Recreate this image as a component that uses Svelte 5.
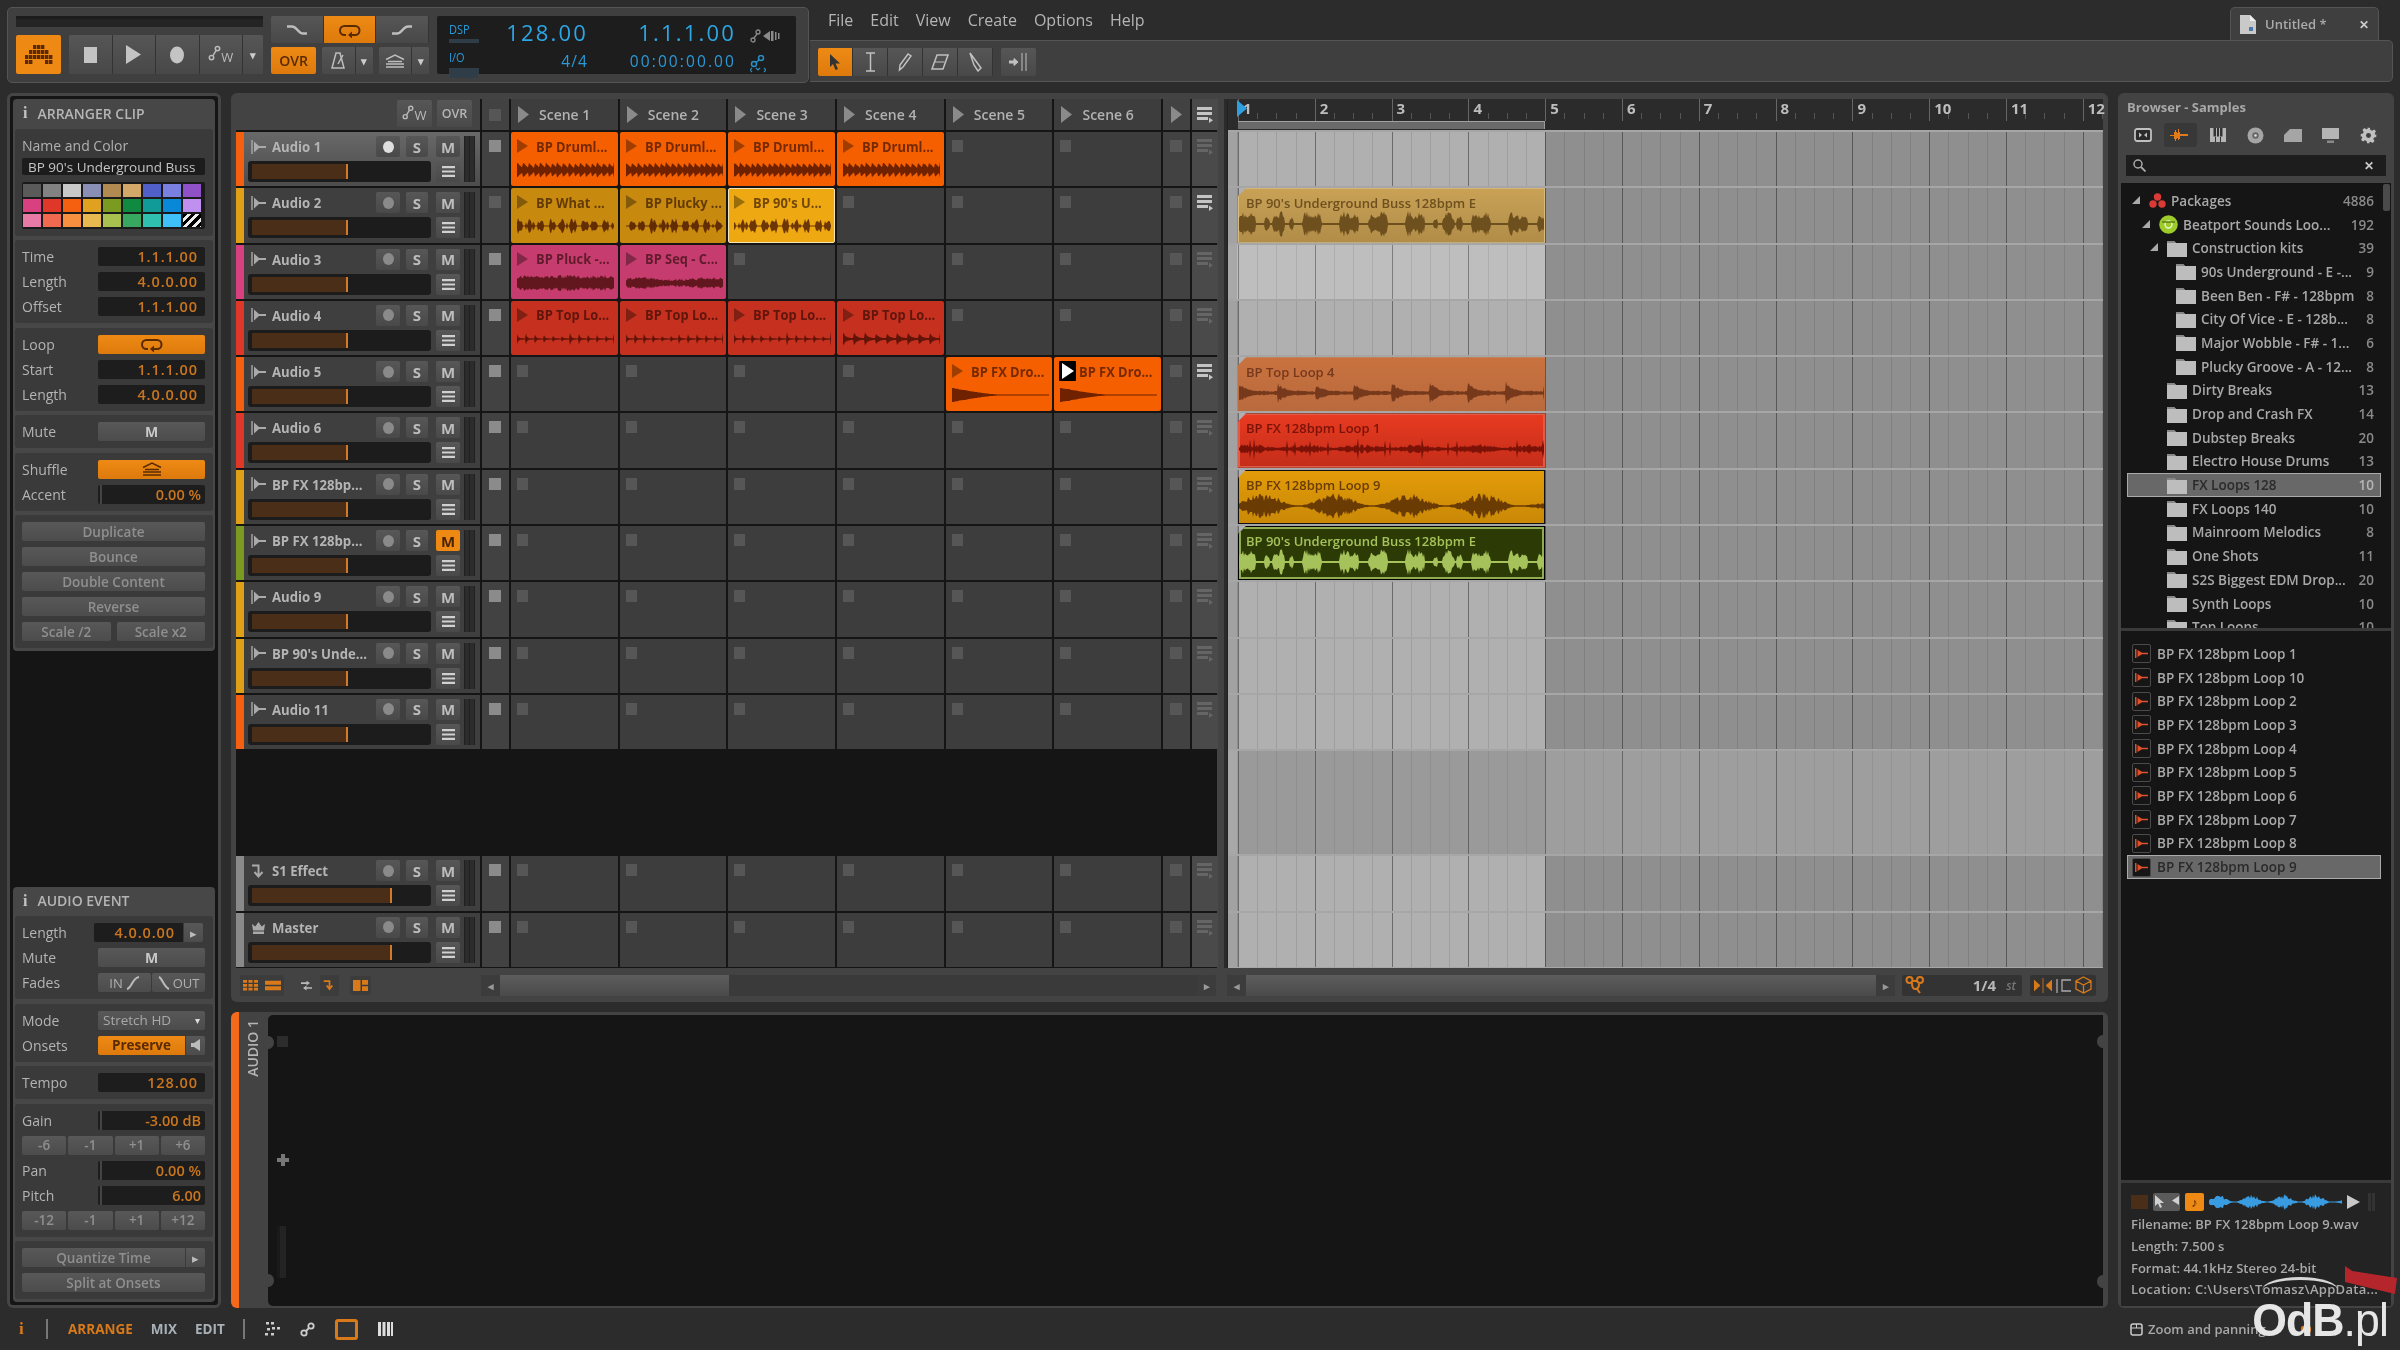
<script>
  const palette = [
    '#5a5a5a', '#828282', '#c8c8c8', '#8a8fb5', '#b08a50', '#d4a868', '#5060c8', '#7a80e0', '#9050c8',
    '#d84080', '#e03828', '#f56010', '#e0a020', '#7a9a20', '#108a40', '#109a98', '#0a88d8', '#c090f0',
    '#e87aa8', '#f06a50', '#f89040', '#e8b850', '#a8c050', '#38a860', '#30c0b0', '#40c0f8', '#000'
  ];

  const orange = '#f56010', gold = '#dfa018', pink = '#d84080', red = '#e03828', green = '#7a9a20';

  const tracks = [
    { name: 'Audio 1', color: orange, sel: true, bright: false },
    { name: 'Audio 2', color: gold, bright: true },
    { name: 'Audio 3', color: pink },
    { name: 'Audio 4', color: red },
    { name: 'Audio 5', color: orange, bright: true },
    { name: 'Audio 6', color: red },
    { name: 'BP FX 128bp...', color: gold },
    { name: 'BP FX 128bp...', color: green, muted: true },
    { name: 'Audio 9', color: gold },
    { name: "BP 90's Unde...", color: gold },
    { name: 'Audio 11', color: orange }
  ];

  const bottomTracks = [
    { name: 'S1 Effect', color: '#8a8a8a', icon: 'fx', wide: true },
    { name: 'Master', color: '#8a8a8a', icon: 'crown', wide: true }
  ];

  const rng = (seed) => () => (seed = (seed * 16807) % 2147483647) / 2147483647;

  // fake waveform, mirrored around the middle
  function wave(kind, seed, w, h) {
    const r = rng(seed);
    const top = [];
    const bot = [];
    for (let x = 0; x <= w; x += 1) {
      const t = x / w;
      let a = 0.1;
      if (kind === 'drum') {
        const ph = (t * 17) % 1;
        a = 0.25 + 0.75 * (1 - ph) * (0.8 + 0.2 * r());
      } else if (kind === 'bass') {
        const s = Math.sin(t * Math.PI * 18 + seed) + 0.7 * Math.sin(t * Math.PI * 47 + 1);
        a = s > -0.25 ? 0.3 + 0.55 * r() * (0.5 + 0.5 * Math.min(s, 1)) + 0.15 * Math.min(s, 1) : 0.07;
      } else if (kind === 'pluck') {
        a = 0.55 + 0.45 * r();
      } else if (kind === 'pluck2') {
        a = 0.3 + 0.35 * r() + 0.1 * Math.sin(t * 9);
      } else if (kind === 'top') {
        const ph = (t * 11) % 1;
        a = 0.08 + 0.9 * Math.exp(-ph * 9) * (0.6 + 0.4 * r());
      } else if (kind === 'top2') {
        const ph = (t * 9) % 1;
        a = 0.1 + 0.9 * Math.exp(-ph * 4) * (0.7 + 0.3 * r());
      } else if (kind === 'drop') {
        a = t < 0.5 ? 0.06 + 0.94 * Math.pow(1 - t * 2, 1.5) * (0.85 + 0.15 * r()) : 0.06;
      } else if (kind === 'loop') {
        const ph = (t * 8) % 1;
        a = 0.08 + 0.85 * Math.exp(-ph * 5) * (0.5 + 0.5 * r()) + (ph > 0.5 ? 0.08 * r() : 0);
      } else if (kind === 'fx1') {
        a = 0.08 + 0.3 * Math.abs(Math.sin(t * 17 + 1)) * r() + (r() > 0.96 ? 0.5 : 0);
      } else if (kind === 'fx9') {
        const s = Math.abs(Math.sin(t * 13 + 0.6));
        a = 0.05 + 0.95 * s * s * (0.35 + 0.65 * r()) * (t > 0.9 ? 0.3 : 1);
      }
      const amp = Math.min(a, 1) * (h / 2);
      top.push(`${x} ${(h / 2 - amp).toFixed(1)}`);
      bot.unshift(`${x} ${(h / 2 + amp).toFixed(1)}`);
    }
    return 'M' + top.join('L') + 'L' + bot.join('L') + 'Z';
  }

  const clipColors = { orange: '#f55f00', gold: '#c88a0e', pink: '#c73c6e', red: '#c5301f', sel: '#eda812' };

  // session clips by row, by scene
  const clips = {
    0: [['BP Druml...', 'orange', 'drum'], ['BP Druml...', 'orange', 'drum'], ['BP Druml...', 'orange', 'drum'], ['BP Druml...', 'orange', 'drum']],
    1: [['BP What ...', 'gold', 'bass'], ['BP Plucky ...', 'gold', 'bass'], ["BP 90's U...", 'sel', 'bass']],
    2: [['BP Pluck -...', 'pink', 'pluck'], ['BP Seq - C...', 'pink', 'pluck2']],
    3: [['BP Top Lo...', 'red', 'top'], ['BP Top Lo...', 'red', 'top'], ['BP Top Lo...', 'red', 'top'], ['BP Top Lo...', 'red', 'top2']],
    4: [null, null, null, null, ['BP FX Dro...', 'orange', 'drop'], ['BP FX Dro...', 'orange', 'drop', true]]
  };
  const scenes = [0, 1, 2, 3, 4, 5];

  const laneClips = {
    1: { name: "BP 90's Underground Buss 128bpm E", kind: 'bass', cls: 'tan' },
    4: { name: 'BP Top Loop 4', kind: 'loop', cls: 'rust' },
    5: { name: 'BP FX 128bpm Loop 1', kind: 'fx1', cls: 'fire' },
    6: { name: 'BP FX 128bpm Loop 9', kind: 'fx9', cls: 'amber' },
    7: { name: "BP 90's Underground Buss 128bpm E", kind: 'bass', cls: 'moss' }
  };

  const bars = [1, 2, 3, 4, 5, 6, 7, 8, 9, 10, 11, 12];

  const tree = [
    { t: 'Packages', n: 4886, lvl: 0, open: true, ic: 'pkg' },
    { t: 'Beatport Sounds Loo...', n: 192, lvl: 1, open: true, ic: 'bp' },
    { t: 'Construction kits', n: 39, lvl: 2, open: true },
    { t: '90s Underground - E -...', n: 9, lvl: 3 },
    { t: 'Been Ben - F# - 128bpm', n: 8, lvl: 3 },
    { t: 'City Of Vice - E - 128b...', n: 8, lvl: 3 },
    { t: 'Major Wobble - F# - 1...', n: 6, lvl: 3 },
    { t: 'Plucky Groove - A - 12...', n: 8, lvl: 3 },
    { t: 'Dirty Breaks', n: 13, lvl: 2 },
    { t: 'Drop and Crash FX', n: 14, lvl: 2 },
    { t: 'Dubstep Breaks', n: 20, lvl: 2 },
    { t: 'Electro House Drums', n: 13, lvl: 2 },
    { t: 'FX Loops 128', n: 10, lvl: 2, sel: true },
    { t: 'FX Loops 140', n: 10, lvl: 2 },
    { t: 'Mainroom Melodics', n: 8, lvl: 2 },
    { t: 'One Shots', n: 11, lvl: 2 },
    { t: 'S2S Biggest EDM Drop...', n: 20, lvl: 2 },
    { t: 'Synth Loops', n: 10, lvl: 2 },
    { t: 'Top Loops', n: 10, lvl: 2 }
  ];

  const files = ['1', '10', '2', '3', '4', '5', '6', '7', '8', '9'];
</script>

{#snippet auto(size = 26)}
  <span class="auto">
    <svg width={size * 0.5} height={size * 0.7} viewBox="0 0 13 18"><circle cx="9.5" cy="3.5" r="2.2" fill="none" stroke="#bbb" stroke-width="1.5" /><circle cx="3.5" cy="12.5" r="2.2" fill="none" stroke="#bbb" stroke-width="1.5" /><path d="M8 5.5 5 10.5" stroke="#bbb" stroke-width="1.5" /></svg><i>W</i>
  </span>
{/snippet}

{#snippet audioIcon()}
  <svg class="tk-ic" width="15" height="16" viewBox="0 0 15 16"><path d="M1 1v14" stroke="#aaa" stroke-width="1.4" /><path d="M3 2.5 8 7h7v2H8l-5 4.5z" fill="#aaa" /></svg>
{/snippet}

{#snippet loopIcon(c = '#5a2a00')}
  <svg width="22" height="16" viewBox="0 0 22 16"><path d="M7 13H5.5a4.5 4.5 0 0 1 0-9H16a4.5 4.5 0 0 1 0 9h-3" fill="none" stroke={c} stroke-width="2" /><path d="M13 9.5v7l-4-3.5z" fill={c} /></svg>
{/snippet}

{#snippet grooveIcon(c = '#5a2a00')}
  <svg width="20" height="14" viewBox="0 0 20 14"><path d="M1 5.5 10 1l9 4.5M3 7.5h14M1 10h18M1 13h18" fill="none" stroke={c} stroke-width="1.4" /></svg>
{/snippet}

{#snippet menuIcon()}
  <svg width="13" height="11" viewBox="0 0 13 11"><path d="M0 0h13v2.2H0zM0 4.4h13v2.2H0zM0 8.8h13V11H0z" fill="#d0d0d0" /></svg>
{/snippet}

{#snippet manageIcon()}
  <svg width="16" height="17" viewBox="0 0 16 17"><path d="M0 0h15v3H0zM0 5h15v3H0zM0 10h11v3H0z" fill="currentColor" /><path d="M12 10.5l4 2.7-4 2.7z" fill="currentColor" /></svg>
{/snippet}

{#snippet trackHead(tk, i)}
  <div class="head" class:sel={tk.sel}>
    <div class="stripe" style="background:{tk.color}"></div>
    <div class="head-main">
      <div class="head-top">
        {#if tk.icon === 'fx'}
          <svg class="tk-ic" width="15" height="14" viewBox="0 0 15 14"><path d="M1 1.5h6.5V11M3.500 8l4 4.500 4-4.500" fill="none" stroke="#aaa" stroke-width="2" /></svg>
        {:else if tk.icon === 'crown'}
          <svg class="tk-ic" width="15" height="13" viewBox="0 0 15 13"><path d="M1 3l3.300 2.500L7.500 1l3.200 4.500L14 3l-1 6.500H2zM2 10.500h11V13H2z" fill="#aaa" /></svg>
        {:else}
          {@render audioIcon()}
        {/if}
        <span class="tk-name">{tk.name}</span>
        <span class="tk-btn rec" class:lit={tk.sel}><b></b></span>
        <span class="tk-btn s">S</span>
        <span class="tk-btn m" class:on={tk.muted}>M</span>
      </div>
      <div class="head-bot">
        <div class="fader" class:wide={tk.wide}><div class="fader-fill"></div></div>
        <span class="tk-btn menu">{@render menuIcon()}</span>
      </div>
    </div>
    <div class="meter"><i></i><i></i></div>
  </div>
{/snippet}

{#snippet slotRow(i, dim, bright)}
  <div class="cell stop"><span class="sq" class:dim></span></div>
  {#each scenes as s}
    {@const clip = clips[i]?.[s]}
    {#if clip}
      <div class="clip" class:pick={clip[1] === 'sel'} style="background:{clipColors[clip[1]]}">
        <div class="clip-top">
          {#if clip[3]}
            <span class="playing"><svg width="12" height="16" viewBox="0 0 12 16"><path d="M0 0l12 8-12 8z" fill="#fff" /></svg></span>
          {:else}
            <svg class="clip-tri" width="11" height="14" viewBox="0 0 11 14"><path d="M0 0l11 7-11 7z" fill="rgba(0,0,0,.35)" /></svg>
          {/if}
          <span class="clip-name">{clip[0]}</span>
        </div>
        <svg class="clip-wave" width="97" height="16" viewBox="0 0 97 16"><path d={wave(clip[2], 7 + i * 31 + s * 17, 97, 16)} fill="rgba(60,10,0,.72)" /></svg>
      </div>
    {:else}
      <div class="cell empty"><span class="slot"></span></div>
    {/if}
  {/each}
  <div class="cell stop end"><span class="sq dimmer"></span></div>
  <div class="cell manage" class:bright>{@render manageIcon()}</div>
{/snippet}

<div class="app">
  <header class="top">
    <section class="transport">
      <div class="tr-left">
        <div class="tr-slider"></div>
        <div class="tr-row">
          <div class="logo">
            <svg width="30" height="20" viewBox="0 0 30 20" fill="#5a2a00">
              {#each [[9, 0], [13, 0], [17, 0], [5, 5], [9, 5], [13, 5], [17, 5], [21, 5], [1, 10], [5, 10], [9, 10], [13, 10], [17, 10], [21, 10], [25, 10], [1, 15], [5, 15], [21, 15], [25, 15]] as d}
                <rect x={d[0]} y={d[1]} width="3.400" height="4" />
              {/each}
            </svg>
          </div>
          <div class="tr-group">
            <span class="tb"><svg width="13" height="16"><rect width="13" height="16" fill="#c4c4c4" /></svg></span>
            <span class="tb"><svg width="15" height="19"><path d="M0 0l15 9.500L0 19z" fill="#c4c4c4" /></svg></span>
            <span class="tb"><svg width="16" height="18"><ellipse cx="8" cy="9" rx="7" ry="8.500" fill="#c4c4c4" /></svg></span>
            <span class="tb">{@render auto()}</span>
            <span class="tb drop">▾</span>
          </div>
        </div>
      </div>
      <div class="tr-mid">
        <div class="tri">
          <span class="tb"><svg width="22" height="10" viewBox="0 0 22 10"><path d="M1 1.500h5c5 0 6 7 11 7h4" fill="none" stroke="#bdbdbd" stroke-width="2.500" /></svg></span>
          <span class="tb hot">{@render loopIcon()}</span>
          <span class="tb"><svg width="22" height="10" viewBox="0 0 22 10"><path d="M1 8.500h5c5 0 6-7 11-7h4" fill="none" stroke="#bdbdbd" stroke-width="2.500" /></svg></span>
        </div>
        <div class="tr-row2">
          <span class="ovr hot">OVR</span>
          <div class="tr-group small">
            <span class="tb"><svg width="14" height="17" viewBox="0 0 14 17"><path d="M5 1h4l4 15H1z" fill="none" stroke="#bdbdbd" stroke-width="1.500" /><path d="M7 12 12 3" stroke="#bdbdbd" stroke-width="1.500" /></svg></span>
            <span class="tb drop">▾</span>
          </div>
          <div class="tr-group small">
            <span class="tb">{@render grooveIcon('#bdbdbd')}</span>
            <span class="tb drop">▾</span>
          </div>
        </div>
      </div>
      <div class="display">
        <div class="d-col d-io">
          <span>DSP</span><i class="io-a"></i>
          <span>I/O</span><i class="io-b"></i>
        </div>
        <div class="d-col d-tempo">
          <span class="big">128.00</span>
          <span class="small-d">4/4</span>
        </div>
        <div class="d-col d-pos">
          <span class="big">1.1.1.00</span>
          <span class="small-d clock">00:00:00.00</span>
        </div>
        <div class="d-col d-end">
          <svg width="30" height="14" viewBox="0 0 30 14"><circle cx="8" cy="3" r="2" fill="none" stroke="#8a8a8a" stroke-width="1.300" /><circle cx="3" cy="11" r="2" fill="none" stroke="#8a8a8a" stroke-width="1.300" /><path d="M7 5 4 9" stroke="#8a8a8a" stroke-width="1.300" /><path d="M13 7l7-5v10zM21 2h2.500v10H21zM25 3h1.500v8H25zM28 4h1.500v6H28z" fill="#8a8a8a" /></svg>
          <svg width="16" height="18" viewBox="0 0 16 18"><circle cx="11" cy="3" r="2.500" fill="none" stroke="#2a8fc4" stroke-width="1.500" /><circle cx="4" cy="9" r="2.500" fill="none" stroke="#2a8fc4" stroke-width="1.500" /><path d="M9 5 6 7.500" stroke="#2a8fc4" stroke-width="1.500" /><path d="M2 13 0 15l2 2M14 13l2 2-2 2M6 13l2 2 2-2" fill="none" stroke="#2a8fc4" stroke-width="1.200" /></svg>
        </div>
      </div>
    </section>

    <div class="top-right">
      <div class="menubar">
        <nav class="menu">
          {#each ['File', 'Edit', 'View', 'Create', 'Options', 'Help'] as m}<span>{m}</span>{/each}
        </nav>
        <div class="tab">
          <svg width="16" height="19" viewBox="0 0 16 19"><path d="M0 0h10l6 6v13H0z" fill="#c9c9c9" /><path d="M10 0v6h6z" fill="#eee" /><rect x="9" y="12" width="4" height="4" fill="#4a78a8" /></svg>
          <span>Untitled *</span>
          <b>✕</b>
        </div>
      </div>
      <div class="toolbar">
        <div class="tools">
          <span class="tool hot"><svg width="12" height="17" viewBox="0 0 12 17"><path d="M1 0v13l3-3 2.500 6 2.500-1-2.500-5.500H11z" fill="#333" /></svg></span>
          <span class="tool"><svg width="11" height="20" viewBox="0 0 11 20"><path d="M1 1h9M5.500 1v18M1 19h9" fill="none" stroke="#c0c0c0" stroke-width="1.500" /></svg></span>
          <span class="tool"><svg width="15" height="20" viewBox="0 0 15 20"><path d="M2 13 10 2l3 2-8 11-3.500 3z" fill="none" stroke="#c0c0c0" stroke-width="1.500" /></svg></span>
          <span class="tool"><svg width="18" height="18" viewBox="0 0 18 18"><path d="M6 2h11l-5 14H1z" fill="none" stroke="#c0c0c0" stroke-width="1.500" /><path d="M3.500 9h10" stroke="#c0c0c0" /></svg></span>
          <span class="tool"><svg width="13" height="20" viewBox="0 0 13 20"><path d="M1 1l11 15-3 3L5 13z" fill="none" stroke="#c0c0c0" stroke-width="1.500" /></svg></span>
        </div>
        <span class="tool single"><svg width="20" height="20" viewBox="0 0 20 20"><path d="M0 9h5V6.500l4 3.500-4 3.500V11H0zM13 1v18M17 1v18" fill="#c0c0c0" stroke="#c0c0c0" stroke-width="1" /></svg></span>
      </div>
    </div>
  </header>

  <main class="main">
    <aside class="inspector">
      <div class="pane">
        <h3><b class="i">i</b> ARRANGER CLIP</h3>
        <div class="sec name-sec">
          <div class="lbl">Name and Color</div>
          <div class="name-in">BP 90's Underground Buss</div>
          <div class="swatches">
            {#each palette as c, i}
              <span class:hatch={i === 26} style="background:{c}"></span>
            {/each}
          </div>
        </div>
        <div class="sec">
          <div class="rw"><label>Time</label><span class="val">1.1.1.00</span></div>
          <div class="rw"><label>Length</label><span class="val">4.0.0.00</span></div>
          <div class="rw"><label>Offset</label><span class="val">1.1.1.00</span></div>
        </div>
        <div class="sec">
          <div class="rw"><label>Loop</label><span class="btn hot">{@render loopIcon()}</span></div>
          <div class="rw"><label>Start</label><span class="val">1.1.1.00</span></div>
          <div class="rw"><label>Length</label><span class="val">4.0.0.00</span></div>
        </div>
        <div class="sec">
          <div class="rw"><label>Mute</label><span class="btn strong">M</span></div>
        </div>
        <div class="sec">
          <div class="rw"><label>Shuffle</label><span class="btn hot">{@render grooveIcon()}</span></div>
          <div class="rw"><label>Accent</label><span class="val tick">0.00 %</span></div>
        </div>
        <div class="sec">
          <div class="rw"><span class="btn dimtext">Duplicate</span></div>
          <div class="rw"><span class="btn dimtext">Bounce</span></div>
          <div class="rw"><span class="btn dimtext">Double Content</span></div>
          <div class="rw"><span class="btn dimtext">Reverse</span></div>
          <div class="rw split"><span class="btn dimtext">Scale /2</span><span class="btn dimtext">Scale x2</span></div>
        </div>
      </div>

      <div class="pane event">
        <h3><b class="i">i</b> AUDIO EVENT</h3>
        <div class="sec">
          <div class="rw"><label>Length</label><span class="val joined">4.0.0.00</span><span class="btn arrow">▸</span></div>
          <div class="rw"><label>Mute</label><span class="btn strong">M</span></div>
          <div class="rw"><label>Fades</label>
            <span class="btn fade">IN <svg width="14" height="14" viewBox="0 0 14 14"><path d="M1 13C6 12 6 2 13 1" fill="none" stroke="#bbb" stroke-width="2" /></svg></span>
            <span class="btn fade"><svg width="12" height="14" viewBox="0 0 12 14"><path d="M1 1c3 1 5 10 10 12" fill="none" stroke="#bbb" stroke-width="2" /></svg>OUT</span>
          </div>
        </div>
        <div class="sec">
          <div class="rw"><label>Mode</label><span class="btn select">Stretch HD <em>▾</em></span></div>
          <div class="rw"><label>Onsets</label><span class="btn hot joined preserve">Preserve</span><span class="btn arrow"><svg width="10" height="12" viewBox="0 0 10 12"><path d="M0 4h3l6-4v12L3 8H0z" fill="#bbb" /></svg></span></div>
        </div>
        <div class="sec">
          <div class="rw"><label>Tempo</label><span class="val">128.00</span></div>
        </div>
        <div class="sec">
          <div class="rw"><label>Gain</label><span class="val tick">-3.00 dB</span></div>
          <div class="rw quad">{#each ['-6', '-1', '+1', '+6'] as b}<span class="btn dimtext">{b}</span>{/each}</div>
          <div class="rw"><label>Pan</label><span class="val tick">0.00 %</span></div>
          <div class="rw"><label>Pitch</label><span class="val tick">6.00</span></div>
          <div class="rw quad">{#each ['-12', '-1', '+1', '+12'] as b}<span class="btn dimtext">{b}</span>{/each}</div>
        </div>
        <div class="sec">
          <div class="rw"><span class="btn dimtext joined wide">Quantize Time</span><span class="btn arrow">▸</span></div>
          <div class="rw"><span class="btn dimtext">Split at Onsets</span></div>
        </div>
      </div>
    </aside>

    <div class="center">
      <section class="arrange">
        <div class="arr-body">
          <div class="session">
            <div class="s-row s-header">
              <div class="hdr-left">
                <span class="hdr-btn">{@render auto(24)}</span>
                <span class="hdr-btn ovr-sm">OVR</span>
              </div>
              <div class="cell stop hdr"><span class="sq dimmer"></span></div>
              {#each scenes as s}
                <div class="scene"><svg width="11" height="17" viewBox="0 0 11 17"><path d="M0 0l11 8.500L0 17z" fill="#8a8a8a" /></svg><span>Scene {s + 1}</span></div>
              {/each}
              <div class="cell stop hdr end tri-only"><svg width="11" height="17" viewBox="0 0 11 17"><path d="M0 0l11 8.500L0 17z" fill="#8a8a8a" /></svg></div>
              <div class="cell manage hdr bright">{@render manageIcon()}</div>
            </div>

            {#each tracks as tk, i}
              <div class="s-row">
                {@render trackHead(tk, i)}
                {@render slotRow(i, i === 1, tk.bright)}
              </div>
            {/each}
            <div class="gapfill"></div>
            {#each bottomTracks as tk, i}
              <div class="s-row">
                {@render trackHead(tk, i)}
                {@render slotRow(20 + i, false, false)}
              </div>
            {/each}
          </div>

          <div class="arranger">
            <div class="ruler">
              <div class="ruler-nums">
                {#each bars as b}<span class="bar-no">{b}</span>{/each}
              </div>
              <div class="loop-bar"></div>
              <svg class="playhead" width="11" height="17" viewBox="0 0 11 17"><path d="M0 0l10 8.500L0 17z" fill="#2e9fe0" /></svg>
            </div>
            {#each tracks as tk, i}
              <div class="lane" class:lite={i === 2}>
                {#if laneClips[i]}
                  {@const c = laneClips[i]}
                  <div class="a-clip {c.cls}">
                    <span class="a-name">{c.name}</span>
                    <svg class="a-wave" width="305" height="26" viewBox="0 0 305 26"><path d={wave(c.kind, 90 + (i > 5 && i < 7 ? 3 : 11), 305, 26)} fill="currentColor" /></svg>
                  </div>
                {/if}
              </div>
            {/each}
            <div class="lane spacer"></div>
            <div class="lane"></div>
            <div class="lane"></div>
          </div>
        </div>

        <div class="arr-foot">
          <div class="foot-left">
            <div class="foot-icons">
              <svg width="15" height="11" viewBox="0 0 22 14" preserveAspectRatio="none" fill="#d97a1a"><path d="M0 0h6v3.500H0zM8 0h6v3.500H8zM16 0h6v3.500h-6zM0 5h6v3.500H0zM8 5h6v3.500H8zM16 5h6v3.500h-6zM0 10h6v3.500H0zM8 10h6v3.500H8zM16 10h6v3.500h-6z" /></svg>
              <svg width="16" height="11" viewBox="0 0 22 14" preserveAspectRatio="none" fill="#d97a1a"><path d="M0 1h22v5H0zM0 8h22v5H0z" /></svg>
            </div>
            <svg class="swap" width="11" height="13" viewBox="0 0 16 16" preserveAspectRatio="none" fill="#bbb"><path d="M0 4h8v2H0zM8 2l5 3-5 3zM8 10h8v2H8zM8 8l-5 3 5 3z" /></svg>
            <span class="foot-ic"><svg width="13" height="13" viewBox="0 0 18 16"><path d="M1 2h8v10M5 8l4 5 4-5" fill="none" stroke="#d97a1a" stroke-width="2.400" /></svg></span>
            <span class="foot-ic lay"><svg width="15" height="11" viewBox="0 0 20 14" preserveAspectRatio="none" fill="#d97a1a"><path d="M0 0h10v14H0zM12 0h8v6h-8zM12 8h8v6h-8z" /></svg></span>
          </div>
          <div class="scroll s1">
            <span class="sc-arrow">◂</span>
            <span class="sc-thumb"></span>
            <span class="sc-rest"></span>
            <span class="sc-arrow">▸</span>
          </div>
          <div class="scroll s2">
            <span class="sc-arrow">◂</span>
            <span class="sc-thumb full"></span>
            <span class="sc-arrow">▸</span>
          </div>
          <div class="quant">
            <svg width="20" height="19" viewBox="0 0 20 19"><circle cx="4.500" cy="4" r="3" fill="none" stroke="#d97a1a" stroke-width="2" /><circle cx="15" cy="4" r="3" fill="none" stroke="#d97a1a" stroke-width="2" /><path d="M7 5h6M7 7c0 4 1 6 3 6s4-1 4-5M12 13l3 4" fill="none" stroke="#d97a1a" stroke-width="2" /></svg>
            <b>1/4</b><em>st</em>
          </div>
          <div class="snap">
            <svg width="18" height="15" viewBox="0 0 18 15"><path d="M0 2l6 5.500L0 13zM18 2l-6 5.500L18 13zM9 0v15" fill="#d97a1a" stroke="#d97a1a" stroke-width="0.800" /></svg>
            <svg width="16" height="15" viewBox="0 0 16 15"><path d="M1 1v14M15 2H6v11h9" fill="none" stroke="#aaa" stroke-width="1.300" /></svg>
            <svg width="17" height="18" viewBox="0 0 17 18"><path d="M8.500 1 16 5v8l-7.500 4L1 13V5zM1 5l7.500 4L16 5M8.500 9v8" fill="none" stroke="#d97a1a" stroke-width="1.300" /></svg>
          </div>
        </div>
      </section>

      <section class="detail">
        <div class="d-strip"></div>
        <div class="d-tab"><span>AUDIO 1</span></div>
        <div class="d-body">
          <span class="notch n1"></span>
          <span class="notch n2"></span>
          <span class="notch n3"></span>
          <span class="notch n4"></span>
          <div class="d-tools">
            <span class="d-sq"></span>
            <svg width="12" height="12" viewBox="0 0 12 12"><path d="M4 0h4v4h4v4H8v4H4V8H0V4h4z" fill="#777" /></svg>
            <span class="d-fader"></span>
          </div>
        </div>
      </section>
    </div>

    <aside class="browser">
      <div class="b-title">Browser - Samples</div>
      <div class="b-tabs">
        <svg width="18" height="14" viewBox="0 0 18 14"><rect x="1" y="1" width="16" height="12" rx="2" fill="#2a2a2a" stroke="#c0c0c0" stroke-width="1.800" /><path d="M8 7 5 4.500v5zM10 7l3-2.500v5z" fill="#c0c0c0" /></svg>
        <span class="b-tab-on"><svg width="20" height="13" viewBox="0 0 20 13" fill="#e07a1a"><path d="M0 6h4V3h1V1h1v2h1v1h1V0h1v3h1v2h8v2h-8v3h-1v3H9v-2H8V9H7v1H6v2H5v-2H4V7H0z" /></svg></span>
        <svg width="16" height="14" viewBox="0 0 16 14" fill="#b5b5b5"><path d="M0 0h16v14H0z" /><path d="M5 9h1v5H5zM10 9h1v5h-1z" fill="#333" /><path d="M3.500 0h2.500v8.500H3.500zM7 0h2v8.500H7zM10 0h2.500v8.500H10z" fill="#333" /></svg>
        <svg width="17" height="17" viewBox="0 0 17 17"><circle cx="8.500" cy="8.500" r="8" fill="#a5a5a5" /><circle cx="8.500" cy="8.500" r="3.200" fill="#666" /><circle cx="8.500" cy="8.500" r="1.300" fill="#ddd" /></svg>
        <svg width="18" height="13" viewBox="0 0 18 13"><path d="M6 0h12v13H0V6z" fill="#a5a5a5" /></svg>
        <svg width="17" height="15" viewBox="0 0 17 15"><path d="M0 0h17v11H0z" fill="#b5b5b5" /><path d="M5 12.500h7V15H5z" fill="#888" /></svg>
        <svg width="17" height="17" viewBox="0 0 24 24"><path d="M10 1h4l.7 3.200 2.400 1 2.800-1.700 2.600 2.600-1.700 2.800 1 2.400L23 10v4l-3.200.7-1 2.400 1.700 2.800-2.600 2.600-2.800-1.700-2.400 1L14 23h-4l-.7-3.200-2.400-1-2.800 1.700-2.600-2.600 1.700-2.800-1-2.400L1 14v-4l3.200-.7 1-2.400-1.700-2.800 2.600-2.600 2.800 1.700 2.400-1z" fill="#c0c0c0" /><circle cx="12" cy="12" r="3.500" fill="#3e3e3e" /></svg>
      </div>
      <div class="b-search">
        <svg width="13" height="13" viewBox="0 0 13 13"><circle cx="5" cy="5" r="4" fill="none" stroke="#aaa" stroke-width="1.500" /><path d="M8 8l4.500 4.500" stroke="#aaa" stroke-width="1.800" /></svg>
        <b>✕</b>
      </div>
      <div class="b-lists">
        <div class="b-tree">
          {#each tree as n}
            <div class="b-row" class:sel={n.sel} style="padding-left:{[22, 32, 40, 49][n.lvl]}px">
              {#if n.open}<span class="caret" style="left:{[5, 15, 23][n.lvl]}px"></span>{/if}
              {#if n.ic === 'pkg'}
                <svg class="b-ic" width="17" height="15" viewBox="0 0 17 15" fill="#d93a36"><circle cx="8.500" cy="4" r="3.700" /><circle cx="4" cy="11" r="3.700" /><circle cx="13" cy="11" r="3.700" /></svg>
              {:else if n.ic === 'bp'}
                <svg class="b-ic" width="19" height="19" viewBox="0 0 19 19"><circle cx="9.500" cy="9.500" r="9.300" fill="#9ccb2a" /><circle cx="9.500" cy="9.500" r="3.500" fill="none" stroke="#e8f5c8" stroke-width="1.400" /><path d="M3 7h13" stroke="#5d7d12" stroke-width="1.600" /></svg>
              {:else}
                <svg class="b-ic" width="20" height="17" viewBox="0 0 20 17"><path d="M0 1h7l2 2h11v14H0z" fill="#bdbdbd" /><path d="M0 1h7l2 2H0z" fill="#888" /></svg>
              {/if}
              <span class="b-t">{n.t}</span>
              <span class="b-n">{n.n}</span>
            </div>
          {/each}
        </div>
        <div class="b-scroll"></div>
        <div class="b-files">
          {#each files as f}
            <div class="b-file" class:sel={f === '9'}>
              <span class="f-ic"><svg width="13" height="9" viewBox="0 0 13 9" fill="#e0502a"><path d="M0 0h1.500v9H0zM2.500 1 7 3.700h6v1.600H7L2.500 8z" /></svg></span>
              <span>BP FX 128bpm Loop {f}</span>
            </div>
          {/each}
        </div>
        <div class="b-prev">
          <div class="pv-row">
            <span class="pv-brown"></span>
            <span class="pv-cur"><svg width="26" height="14" viewBox="0 0 26 14"><path d="M1 0v11l3-2.500 2 4.500 2-1-2-4h4zM25 1v9l-7-4.500z" fill="#d0d0d0" /></svg></span>
            <span class="pv-note">♪</span>
            <svg class="pv-wave" width="133" height="16" viewBox="0 0 133 16"><path d={wave('fx9', 51, 133, 16)} fill="#3a9ce0" /></svg>
            <svg width="13" height="14" viewBox="0 0 13 14"><path d="M0 0l13 7-13 7z" fill="#c8c8c8" /></svg>
            <span class="pv-meter"><i></i><i></i></span>
          </div>
          <p>Filename: BP FX 128bpm Loop 9.wav</p>
          <p>Length: 7.500 s</p>
          <p>Format: 44.1kHz Stereo 24-bit</p>
          <p class="loc">Location: C:\Users\Tomasz\AppData...</p>
        </div>
      </div>
    </aside>
  </main>

  <footer class="status">
    <b class="st-i">i</b>
    <span class="st-sep"></span>
    <span class="st-tab on">ARRANGE</span>
    <span class="st-tab">MIX</span>
    <span class="st-tab">EDIT</span>
    <span class="st-sep"></span>
    <svg width="15" height="14" viewBox="0 0 15 14" fill="#ccc"><path d="M1 0h3v2.500H1zM6 0h3v2.500H6zM7 5h3v2.500H7zM12 5h3v2.500h-3zM2 6h3v2.500H2zM0 11h3v2.500H0zM6 11h3v2.500H6z" /></svg>
    <svg width="15" height="15" viewBox="0 0 15 15"><circle cx="11" cy="4" r="2.700" fill="none" stroke="#ccc" stroke-width="1.800" /><circle cx="4" cy="11" r="2.700" fill="none" stroke="#ccc" stroke-width="1.800" /><path d="M9 6 6 9" stroke="#ccc" stroke-width="1.800" /></svg>
    <span class="st-box"></span>
    <svg width="15" height="14" viewBox="0 0 15 14" fill="#ddd"><path d="M0 0h3v14H0zM4.500 0h3v14h-3zM9 0h3v14H9zM13 0h2v14h-2z" /></svg>
    <div class="st-right">
      <svg width="13" height="13" viewBox="0 0 13 13"><rect x="1" y="1" width="11" height="11" rx="2" fill="none" stroke="#ccc" stroke-width="1.500" /><path d="M1 5h11M6.500 1v4" stroke="#ccc" /></svg>
      <span>Zoom and panning</span>
      <i class="st-dot"></i>
    </div>
  </footer>

  <div class="mark">
    <i class="mark-red"></i>
    <i class="mark-arc"></i>
    <span class="mark-txt"><b>OdB</b>.pl</span>
  </div>
</div>

<style>
  :global(body) {
    margin: 0;
    background: #2c2c2c;
  }

  .app {
    position: relative;
    width: 2400px;
    height: 1350px;
    overflow: hidden;
    display: grid;
    grid-template-rows: 93px 1215px 42px;
    background: #2c2c2c;
    color: #b0b0b0;
    font-family: 'Open Sans', 'Noto Sans', sans-serif;
    font-size: 14px;
    font-weight: 600;
    filter: blur(0.55px);
  }

  .hot {
    background: linear-gradient(#ee8a14, #dd7a0c) !important;
    color: #5a2a00 !important;
  }

  /* transport */
  .top {
    display: flex;
  }

  .transport {
    width: 802px;
    height: 76px;
    margin: 7px 0 0 7px;
    box-sizing: border-box;
    padding: 8px 12px 8px 8px;
    display: flex;
    gap: 8px;
    background: #3f3f3f;
    border: 1px solid #555;
    border-radius: 5px;
  }

  .tr-left {
    width: 247px;
    display: flex;
    flex-direction: column;
    justify-content: space-between;
  }

  .tr-slider {
    height: 11px;
    background: #242424;
    border-top: 3px solid #1c1c1c;
    box-sizing: border-box;
  }

  .tr-row {
    display: flex;
    gap: 8px;
  }

  .logo {
    width: 45px;
    height: 39px;
    border-radius: 2px;
    display: flex;
    align-items: center;
    justify-content: center;
    background: #ee8a14;
  }

  .tr-group {
    display: flex;
    flex: 1;
    height: 39px;
    border-radius: 2px;
    overflow: hidden;
    background: #4f4f4f;
  }

  .tb {
    flex: 1;
    display: flex;
    align-items: center;
    justify-content: center;
    background: linear-gradient(#565656, #484848);
    border-right: 1px solid #333;
  }

  .tb.drop {
    flex: 0 0 20px;
    font-size: 11px;
    color: #ccc;
    border-right: none;
  }

  .auto {
    display: inline-flex;
    align-items: flex-end;
    color: #bbb;
  }

  .auto i {
    font-style: normal;
    font-size: 13px;
    font-weight: 400;
    line-height: 13px;
  }

  .tr-mid {
    width: 158px;
    display: flex;
    flex-direction: column;
    justify-content: space-between;
  }

  .tri {
    display: flex;
    height: 27px;
    border-radius: 2px;
    overflow: hidden;
  }

  .tri .tb {
    flex: 1;
  }

  .tr-row2 {
    display: flex;
    gap: 6px;
  }

  .ovr {
    flex: 0 0 45px;
    height: 27px;
    display: flex;
    align-items: center;
    justify-content: center;
    border-radius: 2px;
    font-size: 14px;
  }

  .tr-group.small {
    height: 27px;
    flex: 1;
  }

  .tr-group.small .tb.drop {
    flex: 0 0 17px;
  }

  .display {
    flex: 1;
    display: flex;
    padding: 0 8px 0 12px;
    background: #1d1d1d;
    border-radius: 2px;
    color: #2a9ad8;
  }

  .d-col {
    display: flex;
    flex-direction: column;
  }

  .d-io {
    width: 55px;
    font-size: 11px;
    font-weight: 400;
    line-height: 14px;
    padding-top: 7px;
  }

  .d-io span {
    transform: scaleY(1.1);
  }

  .d-io i {
    display: block;
    width: 30px;
    background: #2e3d47;
  }

  .io-a {
    height: 4px;
    margin: 2px 0 8px;
  }

  .io-b {
    height: 6px;
    margin-top: 3px;
    box-shadow: 0 5px 0 -1px #2e3d47;
  }

  .d-tempo {
    width: 84px;
    align-items: flex-end;
  }

  .d-pos {
    width: 148px;
    align-items: flex-end;
  }

  .big {
    font-size: 22px;
    font-weight: 400;
    line-height: 26px;
    margin-top: 3px;
    letter-spacing: 2.2px;
    color: #2da6e4;
  }

  .small-d {
    margin-top: 4px;
    font-size: 15.5px;
    font-weight: 400;
    line-height: 24px;
    letter-spacing: 1.1px;
  }

  .small-d.clock {
    letter-spacing: 2.1px;
  }

  .d-end {
    margin-left: 14px;
    gap: 12px;
    padding-top: 13px;
  }

  .top-right {
    flex: 1;
    margin-right: 7px;
    margin-left: 1px;
    display: flex;
    flex-direction: column;
    min-width: 0;
  }

  .menubar {
    height: 40px;
    display: flex;
    justify-content: space-between;
    align-items: flex-end;
  }

  .menu {
    display: flex;
    gap: 17px;
    align-self: center;
    margin-left: 18px;
    font-size: 16px;
    font-weight: 400;
    color: #b5b5b5;
  }

  .tab {
    width: 149px;
    height: 33px;
    margin-right: 14px;
    box-sizing: border-box;
    padding: 0 9px 0 9px;
    display: flex;
    align-items: center;
    gap: 9px;
    background: #3f3f3f;
    border: 1px solid #545454;
    border-bottom: none;
    border-radius: 5px 5px 0 0;
    font-size: 13px;
    color: #aaa;
  }

  .tab b {
    margin-left: auto;
    font-size: 12px;
    color: #ccc;
  }

  .toolbar {
    height: 42px;
    box-sizing: border-box;
    padding: 7px 8px;
    display: flex;
    gap: 8px;
    background: #3f3f3f;
    border: 1px solid #555;
    border-left: none;
    border-radius: 0 5px 5px 0;
  }

  .tools {
    display: flex;
    height: 28px;
    border-radius: 2px;
    overflow: hidden;
  }

  .tool {
    width: 35px;
    height: 28px;
    box-sizing: border-box;
    display: flex;
    align-items: center;
    justify-content: center;
    background: linear-gradient(#565656, #484848);
    border-right: 1px solid #333;
  }

  .tool.single {
    border-radius: 2px;
    border: none;
  }

  /* inspector */
  .main {
    display: grid;
    grid-template-columns: 214px 1877px 276px;
    column-gap: 10px;
    padding-left: 7px;
    height: 1215px;
  }

  .inspector {
    box-sizing: border-box;
    border: 3px solid #454545;
    border-radius: 6px;
    padding: 3px;
    background: #151515;
    display: flex;
    flex-direction: column;
    justify-content: space-between;
  }

  .pane {
    background: #474747;
    border-radius: 4px;
    padding: 0 2px 3px;
    display: flex;
    flex-direction: column;
    gap: 4.5px;
  }

  .pane h3 {
    margin: 0;
    height: 25px;
    box-sizing: border-box;
    padding: 3px 0 0 8px;
    display: flex;
    align-items: center;
    gap: 10px;
    font-size: 14px;
    font-weight: 600;
    color: #b5b5b5;
  }

  .i {
    font-weight: 800;
    font-size: 16px;
    font-family: 'Liberation Serif', serif;
    color: #c4c4c4;
  }

  .sec {
    background: #3a3a3a;
    border-radius: 3px;
    padding: 7px 8px 7px 7px;
    display: flex;
    flex-direction: column;
    gap: 6px;
  }

  .lbl {
    height: 19px;
    line-height: 19px;
    color: #b0b0b0;
    font-size: 14px;
    font-weight: 400;
  }

  .name-sec {
    height: 107px;
    box-sizing: border-box;
    gap: 3px;
  }

  .name-in {
    height: 18px;
    line-height: 18px;
    padding-left: 6px;
    background: #1c1c1c;
    border-radius: 2px;
    font-size: 13.5px;
    font-weight: 400;
    color: #c4c4c4;
    overflow: hidden;
    white-space: nowrap;
  }

  .swatches {
    display: grid;
    grid-template-columns: repeat(9, 18px);
    grid-auto-rows: 13px;
    gap: 2px;
    padding: 2px 1px;
    margin-top: 4px;
    background: #1a1a1a;
    border-radius: 2px;
  }

  .hatch {
    background: repeating-linear-gradient(135deg, #000 0 3px, #eee 3px 6px) !important;
  }

  .rw {
    display: flex;
    height: 19px;
    align-items: center;
  }

  .rw label {
    flex: 0 0 76px;
    font-weight: 400;
    font-size: 14px;
    color: #b4b4b4;
  }

  .val {
    flex: 1;
    height: 19px;
    line-height: 19px;
    padding-right: 7px;
    text-align: right;
    background: #1d1d1d;
    border-radius: 2px;
    color: #c9761e;
    font-size: 14.5px;
    font-weight: 600;
    letter-spacing: 0.9px;
  }

  .val.tick {
    background: linear-gradient(90deg, #1d1d1d 2px, #444 2px 4px, #1d1d1d 4px);
    letter-spacing: 0;
    padding-right: 4px;
  }

  .btn {
    flex: 1;
    height: 19px;
    display: flex;
    align-items: center;
    justify-content: center;
    background: linear-gradient(#585858, #4c4c4c);
    border-radius: 2px;
    color: #a8a8a8;
    font-size: 14px;
    font-weight: 400;
    gap: 3px;
  }

  .btn.strong {
    color: #c8c8c8;
    font-weight: 700;
    font-size: 14px;
  }

  .btn.dimtext {
    color: #8f8f8f;
    font-weight: 600;
    font-size: 13.5px;
  }

  .split,
  .quad {
    gap: 2px;
  }

  .split {
    gap: 6px;
  }

  .joined {
    border-radius: 2px 0 0 2px;
  }

  .val.joined {
    margin-left: -4px;
    box-sizing: border-box;
    padding-right: 8px;
    flex: 0 0 89px;
  }

  .btn.arrow {
    flex: 0 0 19px;
    margin-left: 1px;
    font-size: 13px;
    color: #bbb;
    border-radius: 0 2px 2px 0;
  }

  .btn.fade {
    font-size: 13px;
    color: #b0b0b0;
  }

  .btn.fade + .btn.fade {
    margin-left: 1px;
  }

  .select {
    padding-left: 5px;
    justify-content: flex-start !important;
    font-size: 13.5px !important;
  }

  .select em {
    margin-left: auto;
    margin-right: 5px;
    font-style: normal;
    font-size: 10px;
    color: #ddd;
  }

  .preserve {
    font-weight: 700 !important;
    font-size: 13.5px !important;
  }

  /* session */
  .center {
    display: flex;
    flex-direction: column;
    gap: 10px;
    height: 1215px;
    min-width: 0;
  }

  .arrange {
    height: 909px;
    box-sizing: border-box;
    padding: 6px 5px 0;
    background: #434343;
    border-radius: 6px;
    display: flex;
    flex-direction: column;
  }

  .arr-body {
    height: 869px;
    display: flex;
    gap: 10px;
  }

  .session {
    width: 981px;
    display: flex;
    flex-direction: column;
    gap: 2px;
    background: #151515;
  }

  .s-row {
    display: grid;
    grid-template-columns: 244px 27px repeat(6, 106.7px) 27px 26px;
    column-gap: 2px;
    height: 54.3px;
    flex: none;
  }

  .s-header {
    height: 31px;
  }

  .hdr-left {
    display: flex;
    justify-content: flex-end;
    align-items: flex-start;
    gap: 5px;
    padding: 1px 8px 0 0;
    background: #434343;
  }

  .hdr-btn {
    width: 35px;
    height: 27px;
    display: flex;
    align-items: center;
    justify-content: center;
    background: linear-gradient(#565656, #4a4a4a);
    border-radius: 2px;
  }

  .ovr-sm {
    font-size: 12.5px;
    color: #b5b5b5;
  }

  .scene {
    display: flex;
    align-items: center;
    background: #3d3d3d;
    padding-left: 7px;
    font-size: 14px;
    color: #b2b2b2;
  }

  .scene span {
    margin-left: 10px;
  }

  .gapfill {
    height: 103px;
    flex: none;
  }

  .head {
    display: flex;
    background: #3f3f3f;
  }

  .head.sel {
    background: linear-gradient(#686868, #4c4c4c);
  }

  .stripe {
    flex: 0 0 8px;
  }

  .head-main {
    flex: 0 0 216px;
    min-width: 0;
    padding: 4px 0 0 4px;
    box-sizing: border-box;
  }

  .head-top {
    display: flex;
    align-items: center;
    height: 21px;
  }

  .tk-ic {
    flex: none;
    margin: 0 6px 0 3px;
  }

  .tk-name {
    flex: 1;
    min-width: 0;
    font-size: 14px;
    font-weight: 700;
    color: #b4b4b4;
    white-space: nowrap;
    transform: scaleX(0.94);
    transform-origin: left;
  }

  .tk-btn {
    flex: 0 0 24px;
    height: 21px;
    margin-left: 6px;
    display: flex;
    align-items: center;
    justify-content: center;
    background: linear-gradient(#575757, #494949);
    border-radius: 2px;
    font-size: 15px;
    font-weight: 700;
    color: #bdbdbd;
  }

  .tk-btn.s {
    flex-basis: 22px;
  }

  .tk-btn.m {
    margin-left: 8px;
  }

  .tk-btn.rec b {
    width: 11px;
    height: 12px;
    border-radius: 50%;
    background: #8a8a8a;
  }

  .tk-btn.rec.lit b {
    background: #dedede;
  }

  .tk-btn.on {
    background: #ee8a14;
    color: #4a2300;
  }

  .head-bot {
    display: flex;
    align-items: center;
    margin-top: 4px;
  }

  .fader {
    flex: 0 0 183px;
    height: 21px;
    box-sizing: border-box;
    padding: 3px 4px;
    background: #1c1c1c;
    border-radius: 3px;
  }

  .fader-fill {
    height: 100%;
    width: 96px;
    background: #4b2e17;
    border-right: 2px solid #d07a2a;
    box-sizing: border-box;
  }

  .fader.wide .fader-fill {
    width: 140px;
  }

  .tk-btn.menu {
    margin-left: 5px;
  }

  .meter {
    margin: 4px 0 0 4px;
    width: 11px;
    height: 46px;
    display: flex;
    gap: 1px;
    padding: 0 1px;
    background: #202020;
    box-sizing: border-box;
  }

  .meter i {
    flex: 1;
    background: #2c2c2c;
  }

  .cell {
    background: #3d3d3d;
  }

  .cell.stop {
    background: #424242;
    padding: 8px 0 0 7px;
    box-sizing: border-box;
  }

  .cell.stop.hdr {
    padding-top: 10px;
  }

  .tri-only {
    padding-left: 8px !important;
    padding-top: 7px !important;
  }

  .sq {
    display: block;
    width: 12px;
    height: 12px;
    background: #8b8b8b;
  }

  .sq.dim {
    background: #5b5b5b;
  }

  .sq.dimmer {
    background: #565656;
  }

  .cell.empty {
    padding: 8px 0 0 6px;
    box-sizing: border-box;
  }

  .slot {
    display: block;
    width: 11px;
    height: 12px;
    background: #565656;
  }

  .cell.manage {
    background: #4a4a4a;
    padding: 7px 0 0 5px;
    box-sizing: border-box;
    color: #656565;
  }

  .cell.manage.hdr {
    padding-top: 8px;
    color: #c4c4c4;
  }

  .cell.manage.bright {
    color: #c4c4c4;
  }

  .clip {
    box-sizing: border-box;
    padding: 5px 5px 0 6px;
    border-radius: 2px;
    overflow: hidden;
  }

  .clip.pick {
    border: 1px solid #f4e4b4;
    padding: 4px 4px 0 5px;
  }

  .clip-top {
    display: flex;
    align-items: center;
    height: 18px;
  }

  .clip-tri {
    flex: none;
    margin-right: 8px;
  }

  .playing {
    flex: none;
    width: 17px;
    height: 20px;
    margin-left: -1px;
    margin-right: 3px;
    display: flex;
    align-items: center;
    justify-content: center;
    background: #000;
    border-radius: 1px;
  }

  .clip-name {
    font-size: 14px;
    font-weight: 700;
    white-space: nowrap;
    color: rgba(30, 5, 0, 0.6);
    transform: scaleX(0.92);
    transform-origin: left;
  }

  .clip-wave {
    display: block;
    margin-top: 7px;
  }

  /* arranger */
  .arranger {
    width: 876px;
    display: flex;
    flex-direction: column;
    gap: 2px;
    background: #a6a6a6;
    border-left: 1px solid #222;
    box-sizing: border-box;
    box-shadow: -3px 0 0 #2a2a2a;
  }

  .ruler {
    position: relative;
    flex: none;
    height: 31px;
    background: #2b2b2b;
  }

  .ruler-nums {
    height: 22px;
    margin-left: 10px;
    display: grid;
    grid-template-columns: repeat(12, 76.8px);
    background: repeating-linear-gradient(90deg, #555 0 1px, transparent 1px 19.200px) 0 14px / 100% 6px no-repeat;
  }

  .bar-no {
    padding-left: 4px;
    border-left: 1px solid #666;
    color: #bdbdbd;
    font-size: 15px;
    line-height: 18px;
    font-weight: 700;
  }

  .loop-bar {
    margin-left: 10px;
    width: 307px;
    height: 8px;
    box-sizing: border-box;
    background: #6a6a6a;
    border-top: 1px solid #a0a0a0;
    border-right: 1px solid #999;
  }

  .playhead {
    position: absolute;
    left: 9px;
    top: 1px;
  }

  .lane {
    position: relative;
    flex: none;
    height: 54.3px;
    padding-left: 10px;
    box-sizing: border-box;
    background:
      repeating-linear-gradient(90deg, rgba(0, 0, 0, 0.32) 0 1px, transparent 1px 76.8px) 10px 0,
      repeating-linear-gradient(90deg, rgba(0, 0, 0, 0.1) 0 1px, transparent 1px 19.2px) 10px 0,
      linear-gradient(90deg, #a2a2a2 0 9px, #8e8e8e 9px 10px, #b0b0b0 10px 317px, #8f8f8f 317px);
  }

  .lane.lite {
    background:
      repeating-linear-gradient(90deg, rgba(0, 0, 0, 0.28) 0 1px, transparent 1px 76.8px) 10px 0,
      repeating-linear-gradient(90deg, rgba(0, 0, 0, 0.09) 0 1px, transparent 1px 19.2px) 10px 0,
      linear-gradient(90deg, #a8a8a8 0 9px, #bebebe 9px 317px, #8f8f8f 317px);
  }

  .lane.spacer {
    height: 103px;
    background:
      repeating-linear-gradient(90deg, rgba(0, 0, 0, 0.3) 0 1px, transparent 1px 76.8px) 10px 0,
      repeating-linear-gradient(90deg, rgba(0, 0, 0, 0.07) 0 1px, transparent 1px 19.2px) 10px 0,
      linear-gradient(90deg, #a8a8a8 0 9px, #9a9a9a 9px 317px, #9e9e9e 317px);
  }

  .a-clip {
    width: 307px;
    height: 100%;
    box-sizing: border-box;
    padding: 6px 1px 0;
    position: relative;
    clip-path: polygon(8px 0, 100% 0, 100% 100%, 0 100%, 0 8px);
  }

  .a-name {
    display: block;
    padding-left: 7px;
    font-size: 13px;
    font-weight: 600;
    line-height: 18px;
    white-space: nowrap;
  }

  .a-wave {
    display: block;
    margin-top: -1px;
  }

  .tan {
    background: linear-gradient(#c9a256, #b08c48);
    color: #6e4f1e;
    box-shadow: inset 0 0 0 1px #d8bb7e;
  }

  .rust {
    background: linear-gradient(#c9723f, #b96a3e);
    color: #77391c;
  }

  .fire {
    background: linear-gradient(#e93b21, #c32d19);
    color: #7a1208;
    box-shadow: inset 0 0 0 2px #e05a45, inset 0 0 0 1px #000;
  }

  .amber {
    background: linear-gradient(#e39c08, #c98807);
    color: #6a3c04;
    box-shadow: inset 0 0 0 1px #111;
  }

  .moss {
    background: #2c3a06;
    color: #a6c25a;
    box-shadow: inset 0 0 0 1px #000, inset 0 0 0 3px #92ac52;
  }

  .arr-foot {
    flex: 1;
    display: flex;
    align-items: center;
  }

  .foot-left {
    width: 245px;
    display: flex;
    align-items: center;
    padding-left: 4px;
    box-sizing: border-box;
  }

  .foot-icons {
    display: flex;
    align-items: center;
    gap: 7px;
    padding: 5px 3px;
    background: #3c3c3c;
    border-radius: 3px;
  }

  .swap {
    margin-left: 17px;
  }

  .foot-ic {
    margin-left: 8px;
    padding: 4px 3px;
    background: #3c3c3c;
    border-radius: 3px;
    display: flex;
  }

  .foot-ic.lay {
    margin-left: 11px;
  }

  .scroll {
    height: 21px;
    display: flex;
    background: #333;
    border-radius: 2px;
    overflow: hidden;
  }

  .s1 {
    width: 735px;
    margin-right: 11px;
  }

  .s2 {
    width: 668px;
    margin-right: 7px;
  }

  .sc-arrow {
    flex: 0 0 19px;
    display: flex;
    align-items: center;
    justify-content: center;
    font-size: 11px;
    color: #999;
    background: #3c3c3c;
  }

  .sc-thumb {
    flex: 0 0 229px;
    background: linear-gradient(#5d5d5d, #4a4a4a);
  }

  .sc-thumb.full {
    flex: 1;
  }

  .sc-rest {
    flex: 1;
    background: #3a3a3a;
  }

  .quant {
    width: 120px;
    height: 21px;
    margin-right: 8px;
    display: flex;
    align-items: center;
    padding: 0 3px;
    box-sizing: border-box;
    background: #333;
    border-radius: 2px;
    flex: none;
  }

  .quant b {
    margin-left: auto;
    font-size: 15px;
    font-weight: 700;
    color: #b8b8b8;
  }

  .quant em {
    margin: 0 3px 0 10px;
    font-size: 12px;
    color: #777;
  }

  .snap {
    width: 66px;
    height: 21px;
    display: flex;
    align-items: center;
    justify-content: space-between;
    padding: 0 4px;
    box-sizing: border-box;
    background: #333;
    border-radius: 2px;
    flex: none;
  }

  /* detail editor */
  .detail {
    height: 296px;
    display: flex;
    padding: 3px 5px 2px 0;
    box-sizing: border-box;
    background: #434343;
    border-radius: 6px;
    overflow: hidden;
  }

  .d-strip {
    flex: 0 0 8px;
    margin-top: -3px;
    margin-bottom: -2px;
    background: #f56a18;
  }

  .d-tab {
    flex: 0 0 29px;
    position: relative;
  }

  .d-tab span {
    display: block;
    writing-mode: vertical-rl;
    transform: rotate(180deg);
    margin: 5px 0 0 4px;
    font-size: 14px;
    font-weight: 600;
    color: #b5b5b5;
  }

  .d-body {
    position: relative;
    flex: 1;
    background: #151515;
    border-radius: 5px 0 0 5px;
  }

  .notch {
    position: absolute;
    width: 11px;
    height: 13px;
    border-radius: 50%;
    background: #434343;
  }

  .n1 {
    left: -5px;
    top: 21px;
  }

  .n2 {
    left: -5px;
    top: 259px;
  }

  .n3 {
    right: -5px;
    top: 20px;
  }

  .n4 {
    right: -5px;
    top: 260px;
  }

  .d-tools {
    position: absolute;
    left: 9px;
    top: 21px;
    display: flex;
    flex-direction: column;
    align-items: flex-start;
  }

  .d-sq {
    width: 11px;
    height: 11px;
    margin-bottom: 107px;
    background: #2c2c2c;
  }

  .d-fader {
    width: 9px;
    height: 52px;
    margin-top: 60px;
    background: #232323;
    box-shadow: inset 3px 0 0 #1a1a1a;
  }

  /* browser */
  .browser {
    display: flex;
    flex-direction: column;
    box-sizing: border-box;
    background: #434343;
    border-radius: 6px;
    overflow: hidden;
    height: 1215px;
  }

  .b-title {
    padding: 5px 0 0 9px;
    height: 25px;
    box-sizing: border-box;
    font-size: 13px;
    font-weight: 700;
    color: #a8a8a8;
  }

  .b-tabs {
    height: 24px;
    margin-top: 5px;
    padding-left: 6px;
    display: grid;
    grid-template-columns: repeat(7, 37.6px);
    justify-items: center;
    align-items: center;
  }

  .b-tab-on {
    display: flex;
    align-items: center;
    justify-content: center;
    width: 33px;
    height: 24px;
    background: #383838;
    border-radius: 3px;
  }

  .b-search {
    height: 21px;
    margin: 8px 8px 7px;
    padding: 0 12px 0 7px;
    display: flex;
    align-items: center;
    justify-content: space-between;
    background: #1d1d1d;
  }

  .b-search b {
    font-size: 12px;
    color: #ccc;
  }

  .b-lists {
    flex: 1;
    position: relative;
    margin: 0 3px 2px;
    display: flex;
    flex-direction: column;
    background: #151515;
    min-height: 0;
  }

  .b-tree {
    height: 448px;
    flex: none;
    padding: 6px 0 0;
    box-sizing: border-box;
    overflow: hidden;
    border-bottom: 3px solid #3a3a3a;
  }

  .b-scroll {
    position: absolute;
    right: 1px;
    top: 1px;
    width: 7px;
    height: 27px;
    background: #4a4a4a;
    border-radius: 2px;
  }

  .b-row {
    position: relative;
    height: 23.7px;
    display: flex;
    align-items: center;
    padding-right: 7px;
    margin: 0 10px 0 6px;
    box-sizing: border-box;
    font-size: 13.5px;
    color: #a8a8a8;
    white-space: nowrap;
  }

  .b-row.sel {
    background: #686868;
    box-shadow: inset 0 0 0 1px #aaa;
    color: #2a2a2a;
  }

  .b-row.sel .b-n {
    color: #b5b5b5;
  }

  .caret {
    position: absolute;
    top: 7px;
    width: 0;
    height: 0;
    border-left: 8px solid transparent;
    border-bottom: 8px solid #aaa;
  }

  .b-ic {
    flex: none;
    margin-right: 5px;
  }

  .b-n {
    margin-left: auto;
    color: #8a8a8a;
  }

  .b-files {
    flex: 1;
    padding-top: 11px;
    min-height: 0;
  }

  .b-file {
    height: 23.7px;
    margin: 0 10px 0 6px;
    padding-left: 5px;
    display: flex;
    align-items: center;
    gap: 6px;
    box-sizing: border-box;
    font-size: 13.5px;
    color: #a8a8a8;
  }

  .b-file.sel {
    background: #686868;
    box-shadow: inset 0 0 0 1px #aaa;
    color: #2a2a2a;
  }

  .f-ic {
    width: 17px;
    height: 17px;
    display: flex;
    align-items: center;
    justify-content: center;
    background: #161616;
    border: 1px solid #4a4a4a;
    border-radius: 2px;
  }

  .b-prev {
    flex: 0 0 126px;
    box-sizing: border-box;
    padding: 10px 0 0 10px;
    border-top: 3px solid #3a3a3a;
    background: #232323;
  }

  .pv-row {
    display: flex;
    align-items: center;
    height: 18px;
    gap: 5px;
    margin-bottom: 2px;
  }

  .pv-brown {
    width: 17px;
    height: 14px;
    background: #4b2e17;
  }

  .pv-cur {
    width: 27px;
    height: 18px;
    background: #5a5a5a;
    display: flex;
    align-items: center;
    justify-content: center;
    border-radius: 2px;
  }

  .pv-note {
    width: 19px;
    height: 18px;
    display: flex;
    align-items: center;
    justify-content: center;
    background: #ee8a14;
    color: #5a2a00;
    border-radius: 2px;
    font-size: 13px;
  }

  .pv-meter {
    display: flex;
    gap: 1px;
    margin-left: 3px;
  }

  .pv-meter i {
    width: 3px;
    height: 18px;
    background: #333;
  }

  .b-prev p {
    margin: 0;
    height: 21.800px;
    line-height: 22px;
    font-size: 13px;
    color: #a8a8a8;
    white-space: nowrap;
  }

  .b-prev p.loc {
    letter-spacing: 0.3px;
  }

  /* status bar */
  .status {
    display: flex;
    align-items: center;
    padding-left: 19px;
    gap: 20px;
  }

  .st-i {
    width: 7px;
    font-family: 'Liberation Serif', serif;
    font-weight: 800;
    font-size: 17px;
    color: #d97a1a;
  }

  .st-sep {
    width: 2px;
    height: 20px;
    background: #777;
  }

  .st-tab {
    margin-right: -2px;
    font-size: 13.5px;
    font-weight: 700;
    color: #a8b0b8;
  }

  .st-tab.on {
    color: #d97a1a;
  }

  .st-box {
    width: 17px;
    height: 15px;
    border: 3px solid #d97a1a;
    border-radius: 3px;
    background: #333;
  }

  .st-right {
    margin-left: auto;
    width: 270px;
    box-sizing: border-box;
    display: flex;
    align-items: center;
    gap: 5px;
    white-space: nowrap;
    font-size: 13px;
    color: #a8a8a8;
  }

  .st-dot {
    width: 10px;
    height: 7px;
    margin-left: 30px;
    background: #d97a1a;
    border-radius: 2px;
  }

  /* watermark on top of the capture */
  .mark {
    position: absolute;
    right: 12px;
    bottom: 3px;
    height: 54px;
    color: #e6e6e6;
  }

  .mark-txt {
    display: block;
    font-family: 'Liberation Sans', sans-serif;
    font-size: 47px;
    font-weight: 400;
    line-height: 54px;
    letter-spacing: -1px;
    transform: scaleX(0.95);
    transform-origin: right;
    white-space: nowrap;
  }

  .mark-txt b {
    font-weight: 700;
  }

  .mark-red {
    position: absolute;
    right: -9px;
    top: -27px;
    width: 52px;
    height: 28px;
    background: #b5262c;
    clip-path: polygon(0 0, 14% 18%, 100% 43%, 96% 100%, 0 57%);
  }

  .mark-arc {
    position: absolute;
    right: 50px;
    top: -16px;
    width: 76px;
    height: 10px;
    border-top: 3px solid #d8d8d8;
    border-radius: 50% 50% 0 0 / 100% 100% 0 0;
  }
</style>
